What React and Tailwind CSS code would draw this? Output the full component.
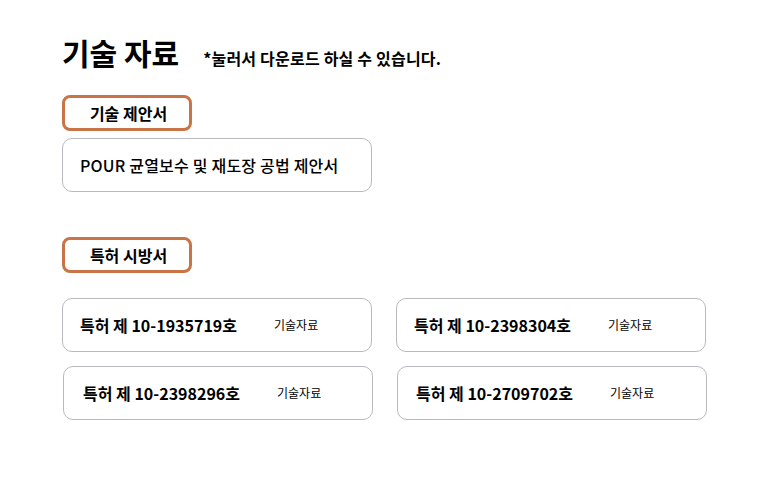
export default function App() {
  const patents = [
    ["특허 제 10-1935719호", "pl-[17px]"],
    ["특허 제 10-2398304호", "pl-[17px]"],
    ["특허 제 10-2398296호", "ml-px pl-[19px]"],
    ["특허 제 10-2709702호", "ml-px pl-[18px]"],
  ];
  return (
    <div
      className="min-h-[502px] w-[768px] bg-white pl-[62px] pt-[34px] text-black"
      style={{ fontFamily: '"Noto Sans CJK KR", "Noto Sans", sans-serif' }}
    >
      <div className="flex items-baseline">
        <h1 className="text-[30px] font-bold leading-[36px]">기술 자료</h1>
        <span className="ml-[24px] text-[16px] font-bold tracking-[0.2px]">*눌러서 다운로드 하실 수 있습니다.</span>
      </div>

      <div className="mt-[25px] flex h-[36px] w-[130px] items-center justify-center rounded-[8px] border-[3px] border-[#c97447] pl-[3px] text-[16px] font-bold">
        기술 제안서
      </div>
      <div className="mt-[7px] flex h-[54px] w-[310px] items-center rounded-[10px] border border-[#b9b9c1] pl-[17px] text-[16px] font-medium tracking-[0.2px]">
        POUR 균열보수 및 재도장 공법 제안서
      </div>

      <div className="mt-[45px] flex h-[36px] w-[130px] items-center justify-center rounded-[8px] border-[3px] border-[#c97447] pl-[3px] text-[16px] font-bold">
        특허 시방서
      </div>

      <div className="mt-[25px] grid w-[644px] grid-cols-[310px_310px] gap-x-[24px] gap-y-[14px]">
        {patents.map(([t, extra]) => (
          <div
            key={t}
            className={`flex h-[54px] w-[310px] items-center rounded-[10px] border border-[#b9b9c1] ${extra}`}
          >
            <span className="text-[16px] font-bold">{t}</span>
            <span className="ml-[37px] text-[12px]">기술자료</span>
          </div>
        ))}
      </div>
    </div>
  );
}
